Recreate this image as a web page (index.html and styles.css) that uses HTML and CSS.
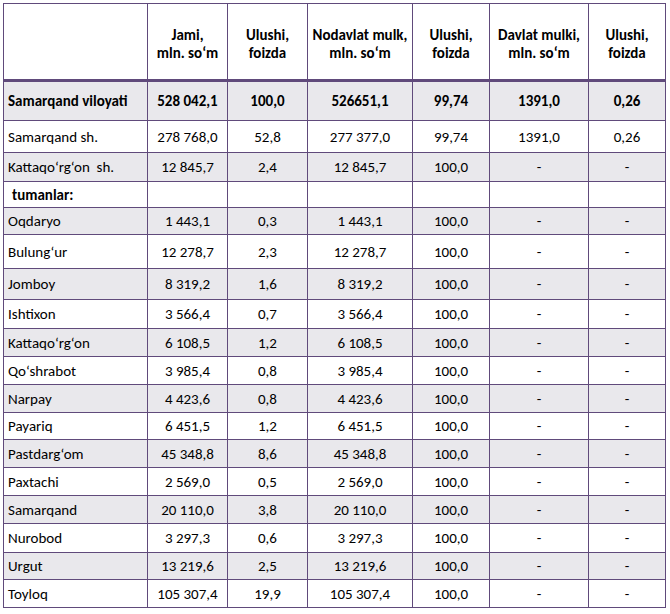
FILE: index.html
```html
<!DOCTYPE html>
<html lang="uz">
<head>
<meta charset="utf-8">
<title>Samarqand viloyati</title>
<link rel="stylesheet" href="styles.css">
</head>
<body>
<table class="tbl">
  <colgroup>
    <col class="c1"><col class="c2"><col class="c3"><col class="c4"><col class="c5"><col class="c6"><col class="c7">
  </colgroup>
  <thead>
    <tr class="hd">
      <th></th>
      <th>Jami,<br>mln. so‘m</th>
      <th>Ulushi,<br>foizda</th>
      <th>Nodavlat mulk,<br>mln. so‘m</th>
      <th>Ulushi,<br>foizda</th>
      <th>Davlat mulki,<br>mln. so‘m</th>
      <th>Ulushi,<br>foizda</th>
    </tr>
  </thead>
  <tbody>
    <tr class="g b r39"><td>Samarqand viloyati</td><td>528 042,1</td><td>100,0</td><td>526651,1</td><td>99,74</td><td>1391,0</td><td>0,26</td></tr>
    <tr class="r32"><td>Samarqand sh.</td><td>278 768,0</td><td>52,8</td><td>277 377,0</td><td>99,74</td><td>1391,0</td><td>0,26</td></tr>
    <tr class="g r29"><td>Kattaqo‘rg‘on&nbsp; sh.</td><td>12 845,7</td><td>2,4</td><td>12 845,7</td><td>100,0</td><td>-</td><td>-</td></tr>
    <tr class="r26"><td class="sub">tumanlar:</td><td></td><td></td><td></td><td></td><td></td><td></td></tr>
    <tr class="g r27"><td>Oqdaryo</td><td>1 443,1</td><td>0,3</td><td>1 443,1</td><td>100,0</td><td>-</td><td>-</td></tr>
    <tr class="r34"><td>Bulung‘ur</td><td>12 278,7</td><td>2,3</td><td>12 278,7</td><td>100,0</td><td>-</td><td>-</td></tr>
    <tr class="g r31"><td>Jomboy</td><td>8 319,2</td><td>1,6</td><td>8 319,2</td><td>100,0</td><td>-</td><td>-</td></tr>
    <tr class="r29"><td>Ishtixon</td><td>3 566,4</td><td>0,7</td><td>3 566,4</td><td>100,0</td><td>-</td><td>-</td></tr>
    <tr class="g r28"><td>Kattaqo‘rg‘on</td><td>6 108,5</td><td>1,2</td><td>6 108,5</td><td>100,0</td><td>-</td><td>-</td></tr>
    <tr class="r28"><td>Qo‘shrabot</td><td>3 985,4</td><td>0,8</td><td>3 985,4</td><td>100,0</td><td>-</td><td>-</td></tr>
    <tr class="g r28"><td>Narpay</td><td>4 423,6</td><td>0,8</td><td>4 423,6</td><td>100,0</td><td>-</td><td>-</td></tr>
    <tr class="r27"><td>Payariq</td><td>6 451,5</td><td>1,2</td><td>6 451,5</td><td>100,0</td><td>-</td><td>-</td></tr>
    <tr class="g r28"><td>Pastdarg‘om</td><td>45 348,8</td><td>8,6</td><td>45 348,8</td><td>100,0</td><td>-</td><td>-</td></tr>
    <tr class="r28"><td>Paxtachi</td><td>2 569,0</td><td>0,5</td><td>2 569,0</td><td>100,0</td><td>-</td><td>-</td></tr>
    <tr class="g r28"><td>Samarqand</td><td>20 110,0</td><td>3,8</td><td>20 110,0</td><td>100,0</td><td>-</td><td>-</td></tr>
    <tr class="r29"><td>Nurobod</td><td>3 297,3</td><td>0,6</td><td>3 297,3</td><td>100,0</td><td>-</td><td>-</td></tr>
    <tr class="g r27"><td>Urgut</td><td>13 219,6</td><td>2,5</td><td>13 219,6</td><td>100,0</td><td>-</td><td>-</td></tr>
    <tr class="r28"><td>Toyloq</td><td>105 307,4</td><td>19,9</td><td>105 307,4</td><td>100,0</td><td>-</td><td>-</td></tr>
  </tbody>
</table>
</body>
</html>
```
FILE: styles.css
```css
html, body {
  margin: 0;
  padding: 0;
  background: #ffffff;
}
body {
  padding: 3px 0 0 3px;
  font-family: "Carlito", "Lato", "Liberation Sans", sans-serif;
  font-size: 15px;
  color: #000000;
}
.tbl {
  border-collapse: collapse;
  table-layout: fixed;
  width: 663px;
}
.c1 { width: 144px; }
.c2 { width: 80px; }
.c3 { width: 80px; }
.c4 { width: 105px; }
.c5 { width: 77px; }
.c6 { width: 99px; }
.c7 { width: 77px; }
.tbl th,
.tbl td {
  border: 1px solid #604a7b;
  padding: 0 4px;
  text-align: center;
  vertical-align: middle;
  line-height: 18px;
  white-space: nowrap;
  overflow: hidden;
}
.tbl th {
  font-weight: bold;
  border-bottom: 3px solid #604a7b;
  padding-top: 4px;
}
.hd { height: 77px; }
.tbl td:first-child {
  text-align: left;
  padding-left: 4px;
}
.tbl td.sub {
  font-weight: bold;
  padding-left: 8px;
}
.g td { background: #e9e8ec; }
.b td { font-weight: bold; }
.r26 { height: 26px; }
.r27 { height: 27px; }
.r28 { height: 28px; }
.r29 { height: 29px; }
.r31 { height: 31px; }
.r32 { height: 32px; }
.r34 { height: 34px; }
.r39 { height: 40px; }
```
